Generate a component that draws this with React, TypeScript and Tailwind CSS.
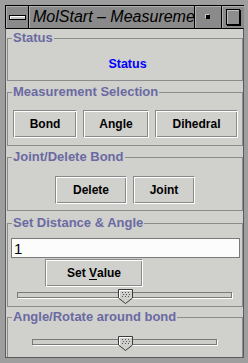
import React from "react";

const btn =
  "h-[28px] border border-t-[#8a8a8a] border-l-[#8a8a8a] border-b-white border-r-white shadow-[inset_1px_1px_0_#ffffff,inset_-1px_-1px_0_#8a8a8a] bg-[#d0d0cc] text-[12px] font-bold text-black leading-none flex items-center justify-center";

function Legend({ children }: { children: React.ReactNode }) {
  return (
    <legend className="ml-[4px] px-[1px] text-[13px] leading-[12px] font-bold text-[#6a6aa2] whitespace-nowrap">
      {children}
    </legend>
  );
}

function Thumb() {
  return (
    <svg width="15" height="15" viewBox="0 0 15 15" className="block">
      <polygon points="0.5,0.5 14.5,0.5 14.5,9 7.5,14.5 0.5,9" fill="#cfcfcb" stroke="#3a3a3a" strokeWidth="1" />
      <polyline points="1.5,9 1.5,1.5 13.5,1.5" fill="none" stroke="#ffffff" strokeWidth="1" />
      <g fill="#555">
        <rect x="4" y="3" width="1" height="1" />
        <rect x="7" y="3" width="1" height="1" />
        <rect x="10" y="3" width="1" height="1" />
        <rect x="5" y="5" width="1" height="1" />
        <rect x="8" y="5" width="1" height="1" />
        <rect x="11" y="5" width="1" height="1" />
        <rect x="4" y="7" width="1" height="1" />
        <rect x="7" y="7" width="1" height="1" />
        <rect x="10" y="7" width="1" height="1" />
      </g>
    </svg>
  );
}

function Slider({ left, width, thumbAt }: { left: number; width: number; thumbAt: number }) {
  return (
    <div className="relative h-[15px]">
      <div
        className="absolute top-[3px] h-[6px] border border-[#7a7a7a] shadow-[1px_1px_0_#ffffff] bg-[#cdcdc9]"
        style={{ left, width }}
      />
      <div className="absolute top-0" style={{ left: thumbAt }}>
        <Thumb />
      </div>
    </div>
  );
}

export default function App() {
  return (
    <div className="w-[248px] h-[363px] bg-[#9e9e9e] pl-[5px] pt-[5px] pr-[4px] pb-[5px] flex flex-col font-['Liberation_Sans',Arial,sans-serif] overflow-hidden">
      {/* Title bar */}
      <div className="h-[23px] flex bg-[#8a8a8a] border-l border-t border-black">
        <div className="w-[23px] h-full border-r border-black shadow-[inset_1px_1px_0_#b0b0b0] flex items-center justify-center">
          <div className="w-[17px] h-[5px] border border-black bg-[#c4c4c4] shadow-[inset_1px_1px_0_#ffffff]" />
        </div>
        <div className="w-[166px] h-full border-r border-black shadow-[inset_1px_1px_0_#b0b0b0] overflow-hidden whitespace-nowrap pl-[4px] flex items-center">
          <span className="text-[16px] italic text-black leading-none">MolStart – Measurement</span>
        </div>
        <div className="w-[27px] h-full border-r border-black shadow-[inset_1px_1px_0_#b0b0b0] flex items-center justify-center">
          <div className="w-[4px] h-[4px] bg-black shadow-[-1px_-1px_0_#c8c8c8]" />
        </div>
        <div className="flex-1 h-full shadow-[inset_1px_1px_0_#b0b0b0] flex items-center justify-center">
          <div className="w-[14px] h-[16px] border border-black shadow-[inset_1px_1px_0_#c0c0c0,1px_1px_0_#000000] bg-[#8e8e8e]" />
        </div>
      </div>

      {/* Content */}
      <div className="flex-1 bg-[#d0d0cc] border-t border-t-black border-l border-l-[#5a5a5a] border-r border-r-[#5a5a5a] border-b border-b-[#5a5a5a] pl-[1px] pt-[3px] flex flex-col overflow-hidden">
        {/* Status */}
        <fieldset className="border border-[#8c8c8c] px-0">
          <Legend>Status</Legend>
          <div className="pt-[4px] h-[36px] flex items-start justify-center">
            <div className="h-[32px] flex items-center pl-[5px] text-[12.5px] font-bold text-[#0000ff]">Status</div>
          </div>
        </fieldset>

        {/* Measurement Selection */}
        <fieldset className="mt-[5px] border border-[#8c8c8c] px-0">
          <Legend>Measurement Selection</Legend>
          <div className="pt-[12px] pb-[7px] pl-[5px] flex gap-[6px]">
            <button className={`${btn} w-[64px]`}>Bond</button>
            <button className={`${btn} w-[66px]`}>Angle</button>
            <button className={`${btn} w-[83px]`}>Dihedral</button>
          </div>
        </fieldset>

        {/* Joint/Delete Bond */}
        <fieldset className="mt-[5px] border border-[#8c8c8c] px-0">
          <Legend>Joint/Delete Bond</Legend>
          <div className="pt-[13px] pb-[6px] flex justify-center gap-[6px]">
            <button className={`${btn} w-[72px]`}>Delete</button>
            <button className={`${btn} w-[62px]`}>Joint</button>
          </div>
        </fieldset>

        {/* Set Distance & Angle */}
        <fieldset className="mt-[6px] border border-[#8c8c8c] px-0">
          <Legend>Set Distance &amp; Angle</Legend>
          <div className="pt-[9px] pb-[2px] flex flex-col">
            <div className="pl-[3px] pr-[2px]">
              <div className="h-[20px] bg-[#fcfcfc] border border-[#7a7a7a] pl-[2px] flex items-center text-[15px] text-black leading-none">
                1
              </div>
            </div>
            <div className="mt-[1px] pl-[37px]">
              <button className={`${btn} w-[98px]`}>
                Set&nbsp;<span className="underline underline-offset-2">V</span>alue
              </button>
            </div>
            <div className="mt-[2px]">
              <Slider left={9} width={215} thumbAt={110} />
            </div>
          </div>
        </fieldset>

        {/* Angle/Rotate around bond */}
        <fieldset className="mt-[4px] flex-1 border border-[#8c8c8c] border-b-0 px-0">
          <Legend>Angle/Rotate around bond</Legend>
          <div className="pt-[13px]">
            <Slider left={24} width={185} thumbAt={110} />
          </div>
        </fieldset>
      </div>
    </div>
  );
}
